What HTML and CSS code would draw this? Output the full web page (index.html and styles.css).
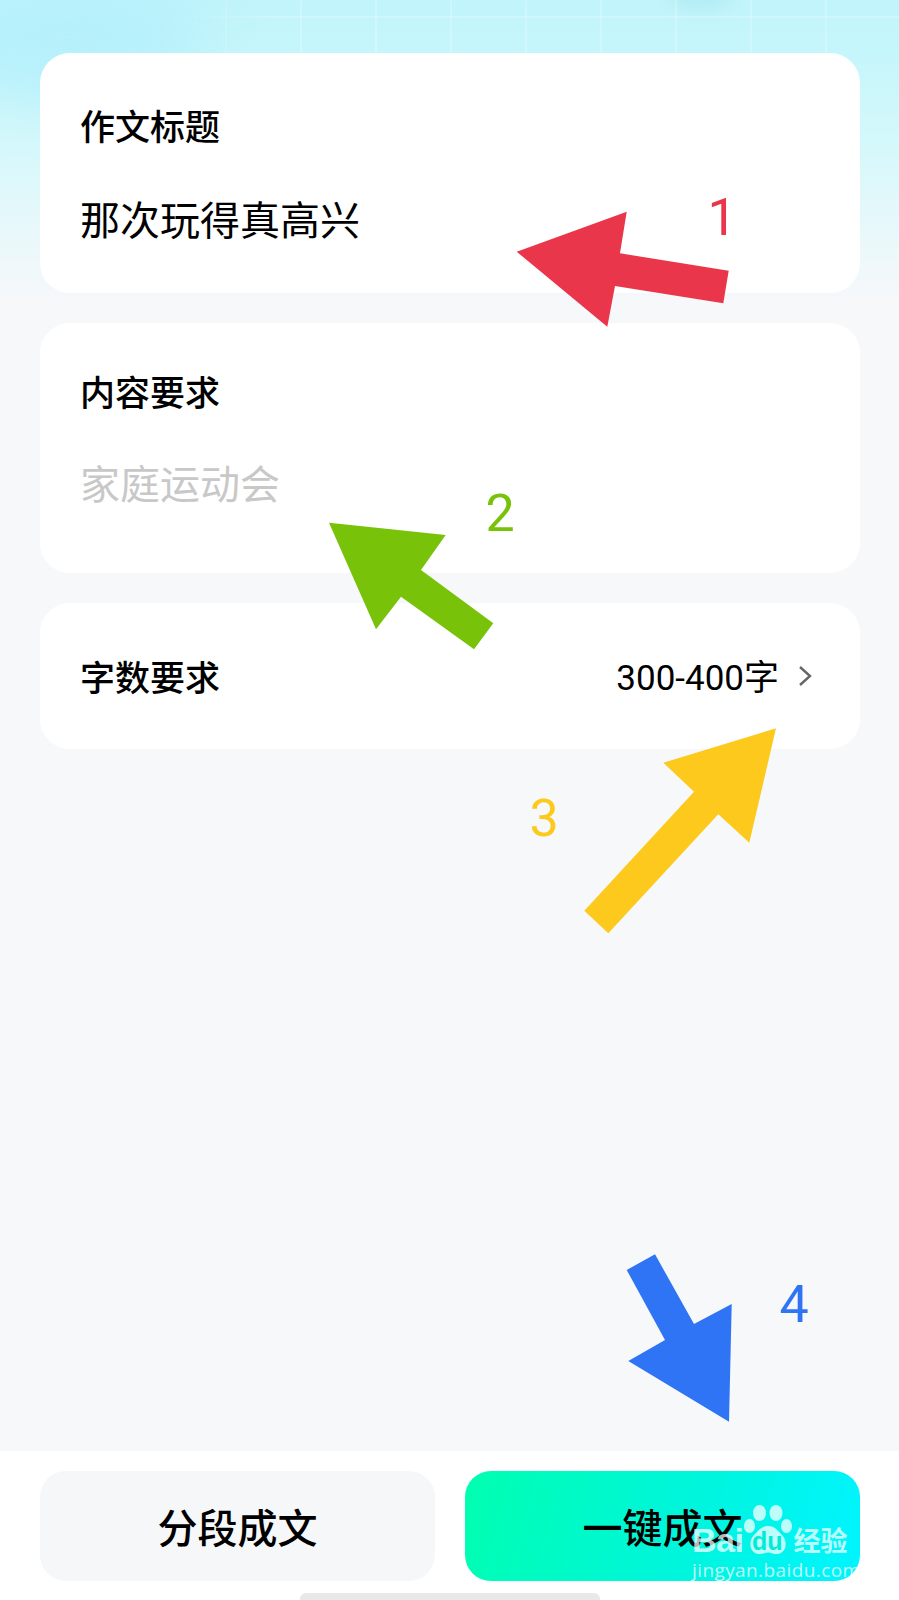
FILE: index.html
```html
<!DOCTYPE html>
<html lang="zh">
<head>
<meta charset="utf-8">
<title>作文</title>
<link rel="stylesheet" href="styles.css">
</head>
<body>
<div class="page">
  <div class="hero">
    <div class="glow glow-left"></div>
    <div class="glow glow-top"></div>
    <div class="grid"></div>
  </div>
  <main class="form">
    <section class="card card-title">
      <h2 class="label">作文标题</h2>
      <p class="value">那次玩得真高兴</p>
    </section>
    <section class="card card-content">
      <h2 class="label">内容要求</h2>
      <p class="value placeholder">家庭运动会</p>
    </section>
    <section class="card card-row">
      <h2 class="label">字数要求</h2>
      <div class="picker">
        <span class="picker-text">300-400字</span>
        <svg class="chevron" viewBox="0 0 14 22" width="14" height="22"><path d="M2 2l10 9-10 9" fill="none" stroke="#666" stroke-width="2.4"/></svg>
      </div>
    </section>
  </main>
  <footer class="footer">
    <div class="actions">
      <button class="btn btn-plain">分段成文</button>
      <button class="btn btn-primary">一键成文</button>
    </div>
    <div class="home-bar"></div>
  </footer>
  <svg class="notes" viewBox="0 0 899 1600" width="899" height="1600">
    <polygon class="red" points="516.7,251.7 626.7,211.7 620,253.3 728.7,270.7 723.3,303.3 615,286 607.3,326.7"/>
    <polygon class="green" points="329,522.7 445.7,535 421,570 493.3,623.3 474,649.3 401,596.7 376,629.3"/>
    <polygon class="yellow" points="776,728.3 663.3,762.7 694,791.7 584.3,910.7 608.3,933.3 718.3,814.3 749.3,842.7"/>
    <polygon class="blue" points="626.7,1270 655,1254.3 694,1324 731.7,1304 729,1421.7 628.3,1361 665,1340"/>
    <text class="num red" x="722" y="235">1</text>
    <text class="num green" x="500" y="531">2</text>
    <text class="num yellow" x="544" y="836">3</text>
    <text class="num blue" x="794" y="1322">4</text>
  </svg>
  <div class="watermark">
    <div class="wm-top">
      <span class="wm-bai">Bai</span>
      <svg class="wm-paw" viewBox="0 0 48 50" width="48" height="50">
        <ellipse cx="15.5" cy="8" rx="6.5" ry="8"/>
        <ellipse cx="32" cy="8" rx="6.5" ry="8"/>
        <ellipse cx="5.5" cy="21" rx="5.5" ry="7"/>
        <ellipse cx="42.5" cy="21" rx="5.5" ry="7"/>
        <path d="M24 21c7 0 10 5 14 9 6 6 5 19-6 19-4 0-5-1.500-8-1.500s-4 1.500-8 1.500c-11 0-12-13-6-19 4-4 7-9 14-9z"/>
      </svg>
      <span class="wm-du">du</span>
      <span class="wm-jy">经验</span>
    </div>
    <div class="wm-url">jingyan.baidu.com</div>
  </div>
</div>
</body>
</html>
```

FILE: styles.css
```css
* { box-sizing: border-box; margin: 0; padding: 0; }
html, body { width: 899px; height: 1600px; overflow: hidden; }
body {
  background: #f6f8fa;
  color: #000;
  font-family: "Noto Sans CJK SC", "Noto Sans", sans-serif;
}
.page {
  position: relative;
  width: 899px;
  height: 1600px;
  display: flex;
  flex-direction: column;
}
.hero {
  position: absolute;
  top: 0;
  left: 0;
  width: 100%;
  height: 300px;
  overflow: hidden;
  background: linear-gradient(180deg, #c1f4fb 0%, #c5f6fb 18%, #d6f8fb 50%, #e9f8fa 78%, #f6f8fa 100%);
}
.grid {
  position: absolute;
  top: 0;
  left: 150px;
  right: 0;
  height: 53px;
  background-image:
    linear-gradient(90deg, rgba(255,255,255,.22) 2px, transparent 2px),
    linear-gradient(180deg, rgba(255,255,255,.22) 2px, transparent 2px);
  background-size: 75px 75px;
  background-position: 0 -59px;
  -webkit-mask-image: linear-gradient(90deg, transparent 0, transparent 20px, #000 130px);
  mask-image: linear-gradient(90deg, transparent 0, transparent 20px, #000 130px);
}
.glow { position: absolute; border-radius: 50%; filter: blur(28px); }
.glow-left { left: -60px; top: -30px; width: 260px; height: 130px; background: #b6f0fb; }
.glow-top { left: 670px; top: -14px; width: 60px; height: 24px; filter: blur(7px); background: #b4ecf4; }
.form {
  position: relative;
  flex: 1;
  padding: 53px 39px 0 40px;
  display: flex;
  flex-direction: column;
  gap: 30px;
}
.card {
  background: #fff;
  border-radius: 30px;
  padding: 0 40px;
}
.card-title { height: 240px; padding-top: 47px; }
.card-content { height: 250px; padding-top: 43px; }
.card-row {
  height: 146px;
  display: flex;
  align-items: center;
  justify-content: space-between;
}
.label {
  font-size: 35px;
  line-height: 50px;
  font-weight: 500;
}
.value {
  font-size: 40px;
  line-height: 58px;
  margin-top: 39px;
  font-weight: 400;
}
.card-content .value { margin-top: 37px; }
.placeholder { color: #c8c8c8; }
.picker { display: flex; align-items: center; gap: 19px; margin-right: 8px; }
.picker-text { font-size: 35px; line-height: 50px; margin-top: 5px; font-family: Roboto, "Noto Sans CJK SC", sans-serif; }
.chevron { display: block; }
.footer {
  position: relative;
  height: 149px;
  background: #fff;
  padding-top: 20px;
  display: flex;
  flex-direction: column;
  align-items: center;
}
.actions {
  width: 100%;
  padding: 0 39px 0 40px;
  display: flex;
  gap: 30px;
}
.btn {
  flex: 1;
  height: 110px;
  border: 0;
  border-radius: 26px;
  font-family: inherit;
  font-size: 40px;
  font-weight: 500;
  color: #000;
}
.btn-plain { background: #f6f7f9; }
.btn-primary { background: linear-gradient(105deg, #00ffb0 0%, #00f5dc 55%, #00f4ff 100%); }
.home-bar {
  margin-top: 12px;
  width: 300px;
  height: 14px;
  border-radius: 6px;
  background: #e8e8e8;
  flex: none;
}
.notes { position: absolute; top: 0; left: 0; }
.red { fill: #ea364a; }
.green { fill: #78c30a; }
.yellow { fill: #fdc91c; }
.blue { fill: #2f74f5; }
.num {
  font-family: Roboto, sans-serif;
  font-size: 52px;
  font-weight: 400;
  text-anchor: middle;
}
.watermark {
  position: absolute;
  left: 692px;
  top: 1505px;
  width: 170px;
  color: rgba(255,255,255,.74);
}
.wm-top { display: flex; align-items: flex-end; height: 50px; position: relative; }
.wm-bai { font-family: "Liberation Sans", sans-serif; font-weight: 700; font-size: 34px; line-height: 30px; letter-spacing: -.5px; margin-right: 1px; }
.wm-paw { fill: rgba(255,255,255,.74); flex: none; }
.wm-du {
  position: absolute;
  left: 60px;
  bottom: 1px;
  font-family: "Liberation Sans", sans-serif;
  font-weight: 700;
  font-size: 25px;
  line-height: 25px;
  color: #00ecd8;
}
.wm-jy { font-size: 27px; line-height: 30px; font-weight: 700; margin-left: 1px; white-space: nowrap; }
.wm-url { font-family: "Open Sans", sans-serif; font-size: 19px; line-height: 28px; letter-spacing: .4px; white-space: nowrap; margin-top: 1px; }
```
